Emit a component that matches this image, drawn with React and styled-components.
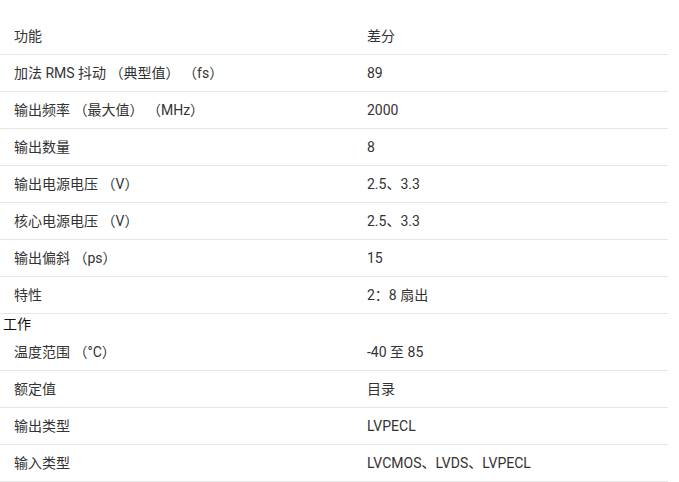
import React from 'react'
import styled, { createGlobalStyle } from 'styled-components'

const GlobalStyle = createGlobalStyle`
  body {
    margin: 0;
    background: #fff;
    font-family: Roboto, "Noto Sans CJK SC", sans-serif;
  }
`

const rows = [
  { name: '功能', value: '差分' },
  { name: '加法 RMS 抖动 （典型值） （fs）', value: '89' },
  { name: '输出频率 （最大值） （MHz）', value: '2000' },
  { name: '输出数量', value: '8' },
  { name: '输出电源电压 （V）', value: '2.5、3.3' },
  { name: '核心电源电压 （V）', value: '2.5、3.3' },
  { name: '输出偏斜 （ps）', value: '15' },
  { name: '特性', value: '2：8 扇出' },
  { caption: '工作', name: '温度范围 （°C）', value: '-40 至 85' },
  { name: '额定值', value: '目录' },
  { name: '输出类型', value: 'LVPECL' },
  { name: '输入类型', value: 'LVCMOS、LVDS、LVPECL' },
]

function App() {
  return (
    <>
      <GlobalStyle />
      <Table>
        {rows.map((row) => (
          <Row key={row.name}>
            {row.caption && <Caption>{row.caption}</Caption>}
            <Cell>{row.name}</Cell>
            <Cell>{row.value}</Cell>
          </Row>
        ))}
      </Table>
    </>
  )
}

const Table = styled.div`
  width: 668px;
  padding-top: 18px;
`

const Row = styled.div`
  display: grid;
  grid-template-columns: 353px 1fr;
  border-bottom: 1px solid #e6e6e6;
`

const Caption = styled.div`
  grid-column: 1 / -1;
  padding-left: 3px;
  font-size: 14px;
  line-height: 20px;
  color: #111;
`

const Cell = styled.div`
  padding: 8px 14px;
  font-size: 14px;
  line-height: 20px;
  color: #333;
`

export default App
